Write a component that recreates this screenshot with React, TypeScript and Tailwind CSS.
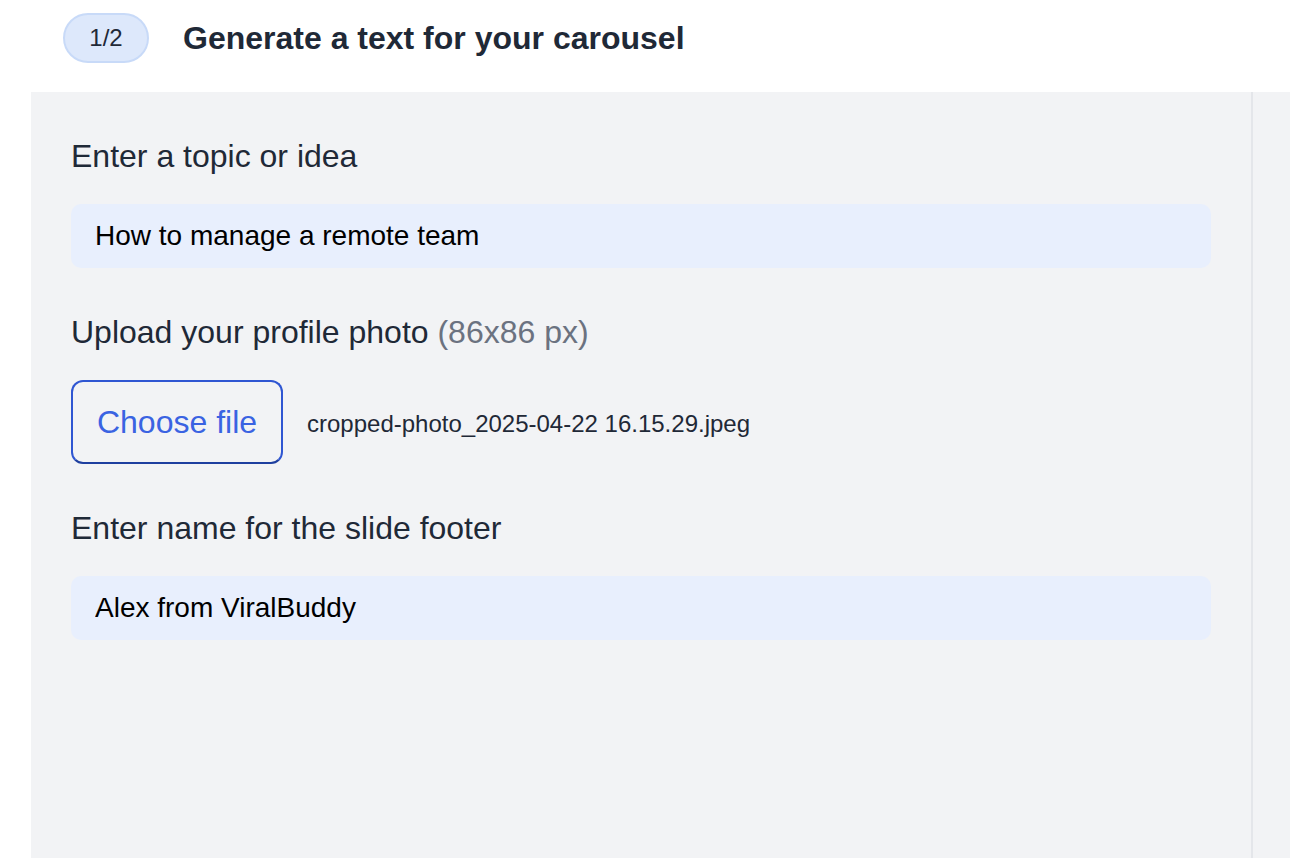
import { useState } from 'react'

const font = { fontFamily: '"Liberation Sans", Arial, sans-serif' }

function Field({ label, value, onChange }: { label: string; value: string; onChange: (v: string) => void }) {
  return (
    <div>
      <label className="block text-[32px] leading-10 text-[#1f2937]">{label}</label>
      <input
        value={value}
        onChange={(e) => onChange(e.target.value)}
        className="mt-7 block h-16 w-full rounded-[10px] bg-[#e8effd] px-6 text-[28px] text-black outline-none"
      />
    </div>
  )
}

export default function App() {
  const [topic, setTopic] = useState('How to manage a remote team')
  const [name, setName] = useState('Alex from ViralBuddy')

  return (
    <div className="flex h-[858px] flex-col bg-white" style={font}>
      <div className="flex h-[92px] shrink-0 items-center gap-[34px] pl-[63px] pb-4">
        <span className="flex h-[50px] w-[86px] items-center justify-center rounded-full border-2 border-[#c8daf8] bg-[#dde8fb] text-[24px] text-[#1f2937]">
          1/2
        </span>
        <h1 className="text-[32px] font-bold text-[#1f2937]">Generate a text for your carousel</h1>
      </div>
      <div className="ml-[31px] flex flex-1 bg-[#f2f3f5]">
        <div className="w-[1222px] border-r-2 border-[#e4e6ea] px-10 pt-11">
          <Field label="Enter a topic or idea" value={topic} onChange={setTopic} />
          <div className="mt-11">
            <label className="block text-[32px] leading-10 text-[#1f2937]">
              Upload your profile photo <span className="text-[#6b7280]">(86x86 px)</span>
            </label>
            <div className="mt-7 flex items-center gap-6">
              <button className="flex h-[84px] w-[212px] items-center justify-center rounded-xl border-2 border-[#2f56d2] border-b-[#1e3f9f] text-[32px] text-[#3a63e2]">
                Choose file
              </button>
              <span className="pt-1 text-[24px] text-[#1f2937]">cropped-photo_2025-04-22 16.15.29.jpeg</span>
            </div>
          </div>
          <div className="mt-11">
            <Field label="Enter name for the slide footer" value={name} onChange={setName} />
          </div>
        </div>
        <div className="flex-1" />
      </div>
    </div>
  )
}
